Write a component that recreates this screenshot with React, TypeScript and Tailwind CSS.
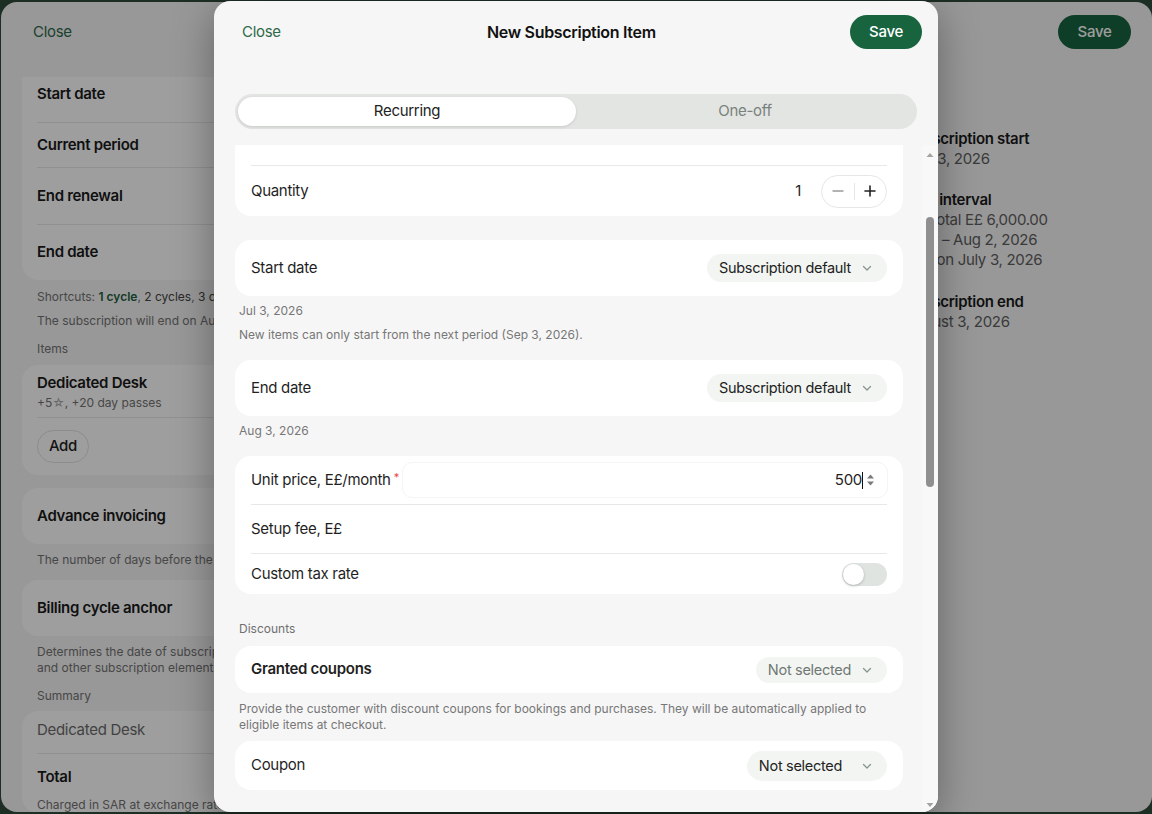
import { useLayoutEffect, useRef } from "react";

// Small helper texts use regular spacing; the rest of the UI is set slightly tighter.
const cap = "text-[12px] leading-4 tracking-normal";
const capDate = "text-[12px] leading-5 tracking-normal";

function Chevron({ className = "" }: { className?: string }) {
  return (
    <svg viewBox="0 0 12 12" className={className} fill="none" stroke="currentColor" strokeWidth={1.3} strokeLinecap="round" strokeLinejoin="round">
      <path d="M2.5 4.5L6 8l3.5-3.5" />
    </svg>
  );
}

function SelectPill({
  label,
  muted = false,
  h = "h-[28px]",
  gap = "gap-[10px]",
}: {
  label: string;
  muted?: boolean;
  h?: string;
  gap?: string;
}) {
  return (
    <div className={`flex ${h} ${gap} items-center rounded-full bg-[#f3f5f3] pl-3 pr-[14px] text-[14.5px] ${muted ? "text-[#6f7872]" : "text-[#222]"}`}>
      <span>{label}</span>
      <Chevron className="h-[12px] w-[12px] text-[#8a948e]" />
    </div>
  );
}

export default function App() {
  const scrollRef = useRef<HTMLDivElement>(null);

  useLayoutEffect(() => {
    if (scrollRef.current) scrollRef.current.scrollTop = 141;
  }, []);

  return (
    <div className="relative h-[814px] w-[1152px] overflow-hidden bg-[#2f4b3c] font-['Inter','Noto_Sans',sans-serif] tracking-[-0.3px]">
      {/* Underlying subscription sheet */}
      <div className="ml-px mt-[2px] h-[810px] overflow-hidden rounded-2xl bg-[#f5f5f5]">
        <div className="flex h-[75px] items-start justify-between pl-5 pr-[21px] pt-[13px]">
          <button className="h-[34px] px-3 text-[15px] text-[#2f6a4c]">Close</button>
          <button className="h-[34px] w-[73px] rounded-full bg-[#18643f] text-[15px] font-medium text-white">Save</button>
        </div>
        <div className="flex gap-10 pl-[21px]">
          <div className="flex w-[843px] shrink-0 flex-col">
            <div className="rounded-b-2xl bg-white px-[15px] text-[15px] font-semibold text-[#1a1a1a]">
              <div className="flex h-[45px] items-start justify-between pt-[6px]">
                <span>Start date</span>
                <span className="font-normal text-[#555]">Jul 3, 2026</span>
              </div>
              <div className="flex h-[45px] items-center justify-between border-t border-[#e8e8e8]">
                <span>Current period</span>
                <span className="font-normal text-[#555]">Jul 3 – Aug 2, 2026</span>
              </div>
              <div className="flex h-[57px] items-center justify-between border-t border-[#e8e8e8]">
                <span>End renewal</span>
                <span className="font-normal text-[#555]">After 1 cycle</span>
              </div>
              <div className="flex h-[56px] items-center justify-between border-t border-[#e8e8e8]">
                <span>End date</span>
                <span className="font-normal text-[#555]">Aug 3, 2026</span>
              </div>
            </div>
            <div className={`mt-[9px] pl-[15px] text-[#737373] ${cap}`}>
              Shortcuts: <span className="font-semibold text-[#1f5f3f]">1 cycle</span>, <span className="text-[#444]">2 cycles</span>, <span className="text-[#444]">3 cycles</span>
            </div>
            <div className={`mt-[8px] pl-[15px] text-[#737373] ${cap}`}>The subscription will end on August 3, 2026.</div>
            <div className={`mt-[12px] pl-[15px] text-[#737373] ${cap}`}>Items</div>
            <div className="mt-[8px] rounded-2xl bg-white px-[15px] pb-[12px] pt-[8px]">
              <div className="text-[15px] font-semibold leading-5 text-[#1a1a1a]">Dedicated Desk</div>
              <div className="text-[12px] leading-5 tracking-normal text-[#737373]">
                +5<span className="text-[#a8a8a8]">☆</span>, +20 day passes
              </div>
              <div className="mt-[4px] border-t border-[#e8e8e8]" />
              <button className="mt-[12px] flex h-[33px] w-[52px] items-center justify-center rounded-full border border-[#e2e2e2] text-[15px] font-medium text-[#222]">Add</button>
            </div>
            <div className="mt-[13px] flex h-[56px] items-center rounded-2xl bg-white px-[15px] text-[15px] font-semibold text-[#1a1a1a]">Advance invoicing</div>
            <div className={`mt-[8px] pl-[15px] text-[#737373] ${cap}`}>The number of days before the start of a period when the invoice is issued.</div>
            <div className="mt-[12px] flex h-[56px] items-center rounded-2xl bg-white px-[15px] text-[15px] font-semibold text-[#1a1a1a]">Billing cycle anchor</div>
            <div className={`mt-[8px] pl-[15px] text-[#737373] ${cap}`}>
              Determines the date of subscription renewals, invoices
              <br />
              and other subscription elements.
            </div>
            <div className={`mt-[12px] pl-[15px] text-[#737373] ${cap}`}>Summary</div>
            <div className="mt-[7px] rounded-2xl bg-white px-[15px]">
              <div className="h-[42px] pt-[9px] text-[15px] leading-5 text-[#6b6b6b]">Dedicated Desk</div>
              <div className="border-t border-[#e8e8e8] pt-[13px]">
                <div className="text-[15px] font-semibold leading-5 text-[#1a1a1a]">Total</div>
                <div className={`mt-[10px] text-[#737373] ${cap}`}>Charged in SAR at exchange rate 1 E£ = 0.076 SAR</div>
              </div>
            </div>
          </div>
          <div className="flex flex-col pt-[52px] text-[15px] leading-5">
            <div className="font-semibold text-[#1a1a1a]">Subscription start</div>
            <div className="text-[#5f5f5f]">July 3, 2026</div>
            <div className="mt-[21px] font-semibold text-[#1a1a1a]">First interval</div>
            <div className="text-[#5f5f5f]">Subtotal E£ 6,000.00</div>
            <div className="text-[#5f5f5f]">Jul 3 – Aug 2, 2026</div>
            <div className="text-[#5f5f5f]">Due on July 3, 2026</div>
            <div className="mt-[22px] font-semibold text-[#1a1a1a]">Subscription end</div>
            <div className="text-[#5f5f5f]">August 3, 2026</div>
          </div>
        </div>
      </div>

      {/* Dim layer */}
      <div className="absolute inset-0 bg-black/[0.38]" />

      {/* New subscription item dialog */}
      <div className="absolute inset-0 flex justify-center pt-px">
        <div className="flex h-[811px] w-[724px] flex-col overflow-hidden rounded-2xl bg-[#f6f6f6] shadow-[0_10px_40px_rgba(0,0,0,0.35)]">
          <div className="flex items-center justify-between px-4 pt-[14px]">
            <button className="h-[34px] px-3 text-[15px] text-[#2f6a4c]">Close</button>
            <div className="text-[16px] font-semibold text-[#111]">New Subscription Item</div>
            <button className="h-[34px] w-[72px] rounded-full bg-[#18643f] text-[15px] font-medium text-white">Save</button>
          </div>

          <div className="mx-[21px] mt-[45px] flex h-[35px] rounded-full bg-[#e2e5e2] p-[3px] text-[15px]">
            <button className="flex-1 rounded-full bg-white text-[#222] shadow-[0_1px_3px_rgba(0,0,0,0.12)]">Recurring</button>
            <button className="flex-1 rounded-full text-[#7a817d]">One-off</button>
          </div>

          <div className="mt-[16px] flex min-h-0 flex-1">
            <div ref={scrollRef} className="min-w-0 flex-1 overflow-hidden pl-[21px] pr-[19px]">
              <div className="flex flex-col pb-6 text-[15px] text-[#1f1f1f]">
                {/* Item, description, quantity */}
                <div className="rounded-2xl bg-white px-4">
                  <div className="flex h-[50px] items-center justify-between">
                    <span>Item</span>
                    <SelectPill label="Dedicated Desk" />
                  </div>
                  <div className="h-[111px] border-t border-[#e8e8e8] pt-3">
                    <div>Description</div>
                    <div className="mt-1 text-[13px] leading-5 text-[#777]">A reserved desk in the shared workspace, available around the clock.</div>
                  </div>
                  <div className="flex h-[51px] items-center border-t border-[#e8e8e8]">
                    <span>Quantity</span>
                    <span className="ml-auto mr-[20px]">1</span>
                    <div className="flex h-[33px] w-[66px] items-center rounded-full border border-[#e6e6e6]">
                      <button className="flex flex-1 justify-center">
                        <svg width="12" height="12" viewBox="0 0 12 12" fill="none" stroke="#9a9a9a" strokeWidth={1.4} strokeLinecap="round">
                          <path d="M1 6h10" />
                        </svg>
                      </button>
                      <span className="h-[17px] w-px bg-[#e6e6e6]" />
                      <button className="flex flex-1 justify-center">
                        <svg width="12" height="12" viewBox="0 0 12 12" fill="none" stroke="#222" strokeWidth={1.6} strokeLinecap="round">
                          <path d="M1 6h10M6 1v10" />
                        </svg>
                      </button>
                    </div>
                  </div>
                </div>

                {/* Start date */}
                <div className="mt-[24px] flex h-[56px] items-center justify-between rounded-2xl bg-white px-4">
                  <span>Start date</span>
                  <SelectPill label="Subscription default" />
                </div>
                <div className={`mt-[5px] pl-1 text-[#777] ${capDate}`}>Jul 3, 2026</div>
                <div className={`mt-[6px] pl-1 text-[#777] ${cap}`}>New items can only start from the next period (Sep 3, 2026).</div>

                {/* End date */}
                <div className="mt-[17px] flex h-[56px] items-center justify-between rounded-2xl bg-white px-4">
                  <span>End date</span>
                  <SelectPill label="Subscription default" />
                </div>
                <div className={`mt-[5px] pl-1 text-[#777] ${capDate}`}>Aug 3, 2026</div>

                {/* Pricing */}
                <div className="mt-[15px] rounded-2xl bg-white px-4">
                  <div className="flex h-[48px] items-center">
                    <span>Unit price, E£/month</span>
                    <span className="ml-[3px] -translate-y-[3px] text-[11px] text-[#e5484d]">*</span>
                    <div className="-mr-px ml-[3px] flex h-[36px] flex-1 items-center justify-end rounded-[10px] border border-[#f5f5f5] pr-[12px]">
                      <span>500</span>
                      <span className="h-[17px] w-px bg-[#111]" />
                      <svg className="ml-[3px]" width="9" height="14" viewBox="0 0 9 14">
                        <path d="M4.5 1.5L8 5.5H1z" fill="#7a7a7a" />
                        <path d="M4.5 12.5L8 8.5H1z" fill="#7a7a7a" />
                      </svg>
                    </div>
                  </div>
                  <div className="flex h-[49px] items-center border-t border-[#e8e8e8]">
                    <span>Setup fee, E£</span>
                  </div>
                  <div className="flex h-[41px] items-center justify-between border-t border-[#e8e8e8]">
                    <span>Custom tax rate</span>
                    <div className="h-[23px] w-[45px] rounded-full bg-[#dfe4e0] p-px">
                      <div className="h-[21px] w-[21px] rounded-full bg-white shadow-[0_1px_3px_rgba(0,0,0,0.22)]" />
                    </div>
                  </div>
                </div>

                {/* Discounts */}
                <div className={`mt-[25px] pl-1 text-[#6f6f6f] ${capDate}`}>Discounts</div>
                <div className="mt-[7px] flex h-[47px] items-center justify-between rounded-2xl bg-white px-4">
                  <span className="font-semibold">Granted coupons</span>
                  <SelectPill label="Not selected" muted h="h-[26px]" />
                </div>
                <div className={`mt-[8px] pl-1 pr-6 text-[#777] ${cap}`}>
                  Provide the customer with discount coupons for bookings and purchases. They will be automatically applied to eligible items at checkout.
                </div>
                <div className="mt-[8px] flex h-[49px] items-center justify-between rounded-2xl bg-white px-4">
                  <span>Coupon</span>
                  <SelectPill label="Not selected" h="h-[30px]" gap="gap-[19px]" />
                </div>

                {/* Benefits */}
                <div className={`mt-[24px] pl-1 text-[#6f6f6f] ${capDate}`}>Benefits</div>
                <div className="mt-[7px] rounded-2xl bg-white px-4">
                  <div className="flex h-[49px] items-center justify-between">
                    <span>Day passes</span>
                    <span>20</span>
                  </div>
                  <div className="flex h-[49px] items-center justify-between border-t border-[#e8e8e8]">
                    <span>Credits</span>
                    <span>5</span>
                  </div>
                  <div className="flex h-[49px] items-center justify-between border-t border-[#e8e8e8]">
                    <span>Meeting room hours</span>
                    <span>0</span>
                  </div>
                </div>
                <div className={`mt-[8px] pl-1 text-[#777] ${cap}`}>Benefits are granted at the start of every period.</div>
                <div className={`mt-[24px] pl-1 text-[#6f6f6f] ${capDate}`}>Notes</div>
                <div className="mt-[7px] h-[96px] rounded-2xl bg-white px-4 pt-3 text-[#999]">Internal note</div>
              </div>
            </div>

            {/* Scrollbar */}
            <div className="flex w-[16px] flex-col items-center bg-[#f8f8f8] pb-[2px] pt-[5px]">
              <svg width="16" height="10" viewBox="0 0 16 10">
                <path d="M8 3L11.5 7h-7z" fill="#a3a3a3" />
              </svg>
              <div className="mt-[57px] h-[270px] w-[8px] rounded-full bg-[#8f8f8f]" />
              <div className="flex-1" />
              <svg width="16" height="10" viewBox="0 0 16 10">
                <path d="M8 7L11.5 3h-7z" fill="#a3a3a3" />
              </svg>
            </div>
          </div>
        </div>
      </div>
    </div>
  );
}
